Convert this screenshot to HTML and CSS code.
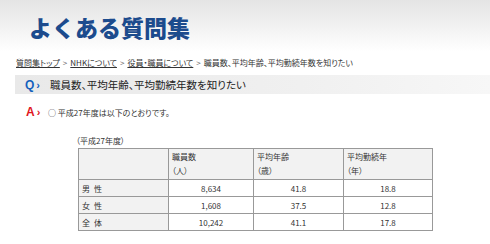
FILE: index.html
```html
<!DOCTYPE html>
<html lang="ja">
<head>
<meta charset="utf-8">
<link rel="stylesheet" href="styles.css">
</head>
<body>
<header class="head">
  <h1 class="title">よくある質問集</h1>
</header>
<nav class="crumbs">
  <a href="#">質問集トップ</a><span class="sep">&gt;</span><a href="#">NHKについて</a><span class="sep">&gt;</span><a href="#">役員・職員について</a><span class="sep">&gt;</span><span>職員数、平均年齢、平均勤続年数を知りたい</span>
</nav>
<div class="qbar">
  <span class="qmark">Q<span class="arr">›</span></span>
  <span class="qtext">職員数、平均年齢、平均勤続年数を知りたい</span>
</div>
<div class="answer">
  <span class="amark">A<span class="arr">›</span></span>
  <span class="atext">○ 平成27年度は以下のとおりです。</span>
</div>
<div class="tablewrap">
  <p class="caption">（平成27年度）</p>
  <table class="stats">
    <tr class="hrow">
      <th class="c1"></th>
      <th class="c2">職員数<br>（人）</th>
      <th class="c3">平均年齢<br>（歳）</th>
      <th class="c4">平均勤続年<br>（年）</th>
    </tr>
    <tr><th class="rh">男性</th><td>8,634</td><td>41.8</td><td>18.8</td></tr>
    <tr><th class="rh">女性</th><td>1,608</td><td>37.5</td><td>12.8</td></tr>
    <tr><th class="rh">全体</th><td>10,242</td><td>41.1</td><td>17.8</td></tr>
  </table>
</div>
</body>
</html>
```
FILE: styles.css
```css
html, body {
  margin: 0;
  padding: 0;
  background: #fff;
  font-family: "Noto Sans CJK JP", "Noto Sans", sans-serif;
  font-feature-settings: "palt";
  color: #333;
}
.head {
  height: 52px;
  background: linear-gradient(#e4e4e4, #ffffff);
  display: flex;
  align-items: center;
  padding-left: 29px;
}
.title {
  margin: 0;
  font-size: 23px;
  font-weight: 900;
  color: #1c4b8d;
  line-height: 1;
  margin-top: 2px;
  font-feature-settings: normal;
}
.crumbs {
  margin: 4px 0 0 16px;
  font-size: 8px;
  line-height: 14px;
  color: #333;
  white-space: nowrap;
}
.crumbs a {
  color: #333;
  text-decoration: underline;
}
.crumbs .sep {
  margin: 0 3px;
  color: #666;
}
.qbar {
  margin: 5px 0 0 15px;
  height: 19px;
  background: linear-gradient(90deg, #e9e9e9 0%, #f0f0f0 60%, #f7f7f7 100%);
  display: flex;
  align-items: center;
  padding-left: 10px;
}
.qmark {
  color: #1560bd;
  font-weight: 700;
  font-size: 12px;
  font-family: "Liberation Sans", sans-serif;
  width: 25px;
}
.arr {
  font-size: 11px;
  margin-left: 2px;
}
.qtext {
  font-size: 10.5px;
  color: #222;
}
.answer {
  margin: 11px 0 0 26px;
  display: flex;
  align-items: center;
  height: 14px;
}
.amark {
  color: #e0161e;
  font-weight: 700;
  font-size: 12px;
  font-family: "Liberation Sans", sans-serif;
  width: 22px;
}
.atext {
  font-size: 8px;
  color: #333;
}
.tablewrap {
  margin: 15px 0 0 78px;
}
.caption {
  margin: 0 0 1px -2px;
  font-size: 8px;
  line-height: 13px;
}
.stats {
  border-collapse: collapse;
  font-size: 8px;
  color: #333;
}
.stats th, .stats td {
  border: 1px solid #999;
  padding: 0 3px;
  height: 16px;
}
.stats .hrow th {
  background: #f2f2f2;
  height: 29px;
  font-weight: 400;
  text-align: left;
  vertical-align: top;
  padding-top: 1px;
  line-height: 14px;
}
.stats .c1 { width: 83px; }
.stats .c2 { width: 78px; }
.stats .c3 { width: 83px; }
.stats .c4 { width: 82px; }
.stats .rh {
  background: #f2f2f2;
  font-weight: 400;
  text-align: left;
  letter-spacing: 4px;
}
.stats td {
  text-align: center;
}
```
